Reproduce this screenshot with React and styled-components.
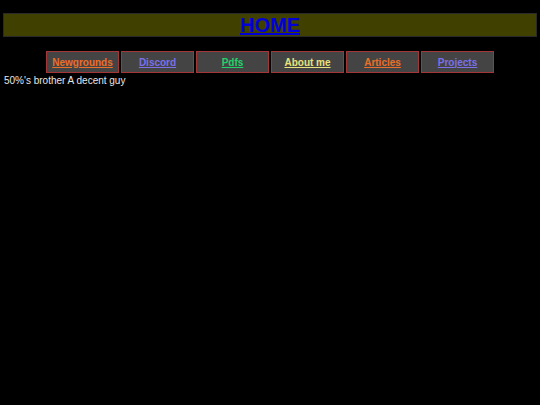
import styled, { createGlobalStyle } from 'styled-components'

const Global = createGlobalStyle`
	html, body {
		margin: 0;
		padding: 0;
		background: #000;
	}
	body {
		font-family: "Liberation Sans", Arial, sans-serif;
		color: #e6e6e6;
	}
`

const Page = styled.div`
	padding: 13px 3px 0 3px;
	min-height: 405px;
	box-sizing: border-box;
`

const Header = styled.header`
	height: 24px;
	border: 1px solid #2a2a2a;
	background-color: #404000;
	display: flex;
	align-items: center;
	justify-content: center;
	box-sizing: border-box;
`

const HomeLink = styled.a`
	font-size: 20px;
	font-weight: 700;
	color: #0000d8;
	text-decoration: underline;
	line-height: 1;
`

const Nav = styled.nav`
	display: flex;
	justify-content: center;
	gap: 2px;
	margin-top: 14px;
`

const Cell = styled.div`
	width: 73px;
	height: 22px;
	box-sizing: border-box;
	border: 1px solid #a33636;
	background-color: #444;
	display: flex;
	align-items: center;
	justify-content: center;
`

const NavLink = styled.a`
	font-size: 10px;
	font-weight: 700;
	color: ${p => p.$color};
	text-decoration: underline;
`

const Bio = styled.p`
	margin: 1px 0 0 1px;
	font-size: 10px;
	line-height: 13px;
	color: #e6e6e6;
`

const links = [
	{ label: 'Newgrounds', color: '#e8702a' },
	{ label: 'Discord', color: '#7b70e8' },
	{ label: 'Pdfs', color: '#22d36a' },
	{ label: 'About me', color: '#e8e27a' },
	{ label: 'Articles', color: '#e8702a' },
	{ label: 'Projects', color: '#7b70e8' },
]

export default function App() {
	return (
		<>
			<Global />
			<Page>
				<Header>
					<HomeLink href="#">HOME</HomeLink>
				</Header>
				<Nav>
					{links.map(l => (
						<Cell key={l.label}>
							<NavLink href="#" $color={l.color}>{l.label}</NavLink>
						</Cell>
					))}
				</Nav>
				<Bio>50%'s brother A decent guy</Bio>
			</Page>
		</>
	)
}
